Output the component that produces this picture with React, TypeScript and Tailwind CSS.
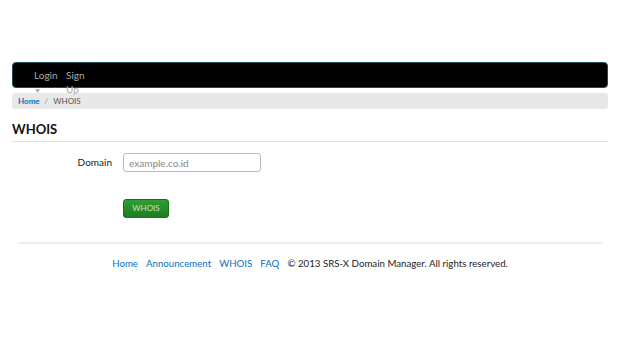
import React from "react";

const App: React.FC = () => {
  return (
    <div className="min-h-[343px] bg-white pt-[62px] text-[#222]" style={{ fontFamily: "Lato, 'Open Sans', sans-serif" }}>
      <div className="px-3">
        {/* top bar */}
        <nav className="h-[26px] bg-black border border-[#1d4c5c] rounded-[4px]">
          <ul className="flex gap-[6px] pl-[21px] pt-[5px] text-[10px] leading-[14px] text-[#aaa]">
            <li className="w-[26px]">Login <span className="text-[7px]">▼</span></li>
            <li className="w-[20px]">Sign Up</li>
          </ul>
        </nav>

        {/* breadcrumb */}
        <div className="mt-[5px] h-[16px] bg-[#e8e8e8] rounded-[3px] px-[6px] flex items-center gap-[5px] text-[8px]">
          <a href="#" className="font-bold text-[#0a6fc2]">Home</a>
          <span className="text-[#999]">/</span>
          <span className="text-[#555]">WHOIS</span>
        </div>

        <h1 className="mt-[12px] text-[13px] leading-[16px] font-bold text-[#111]">WHOIS</h1>
        <hr className="mt-[4px] border-0 border-t border-[#e2e2e2]" />

        {/* form */}
        <form className="pt-[11px]">
          <div className="flex items-center gap-[11px]">
            <label className="w-[100px] text-right text-[10px] text-[#222]">Domain</label>
            <input
              type="text"
              placeholder="example.co.id"
              className="w-[138px] h-[19px] px-[5px] border border-[#bbb] rounded-[3px] text-[10px] placeholder:text-[#888] outline-none"
            />
          </div>
          <div className="mt-[21px] pl-[111px]">
            <button
              type="button"
              className="w-[46px] h-[19px] rounded-[3px] bg-gradient-to-b from-[#2f9f33] to-[#1b7d1f] border border-[#1a6e1d] text-[8px] text-[#c5e5c5]"
            >
              WHOIS
            </button>
          </div>
        </form>
      </div>

      {/* footer */}
      <div className="px-[18px] mt-[24px]">
        <hr className="border-0 border-t-2 border-[#eeeeee]" />
        <div className="mt-[12px] flex justify-center gap-[8px] text-[9.7px] leading-[14px]">
          <a href="#" className="text-[#0a6fc2]">Home</a>
          <a href="#" className="text-[#0a6fc2]">Announcement</a>
          <a href="#" className="text-[#0a6fc2]">WHOIS</a>
          <a href="#" className="text-[#0a6fc2]">FAQ</a>
          <span className="text-[#222]">© 2013 SRS-X Domain Manager. All rights reserved.</span>
        </div>
      </div>
    </div>
  );
};

export default App;
